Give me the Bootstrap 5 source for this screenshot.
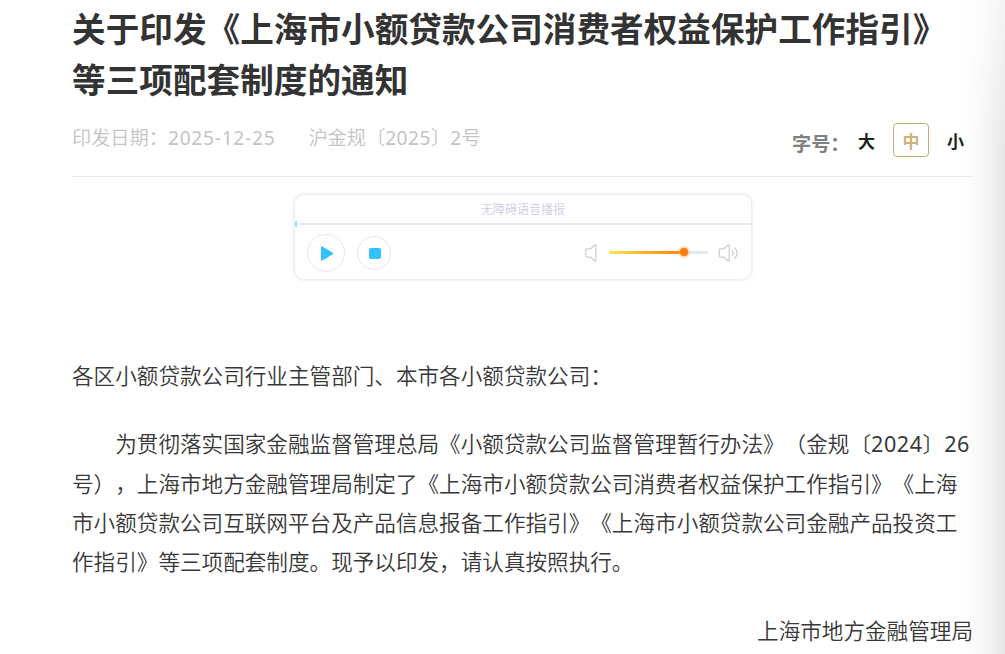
<!DOCTYPE html>
<html lang="zh-CN">
<head>
    <meta charset="UTF-8">
    <meta name="viewport" content="width=device-width, initial-scale=1">
    <title>关于印发《上海市小额贷款公司消费者权益保护工作指引》等三项配套制度的通知</title>
    <link rel="stylesheet" href="https://cdn.jsdelivr.net/npm/bootstrap@5.3.3/dist/css/bootstrap.min.css">
    <style>
        body {
            height: 100vh;
            font-family: "Noto Sans CJK SC", sans-serif;
            color: #383838;
            background:
                linear-gradient(to bottom, rgba(255, 255, 255, .6), rgba(255, 255, 255, 0) 150px),
                linear-gradient(to right, #fff 955px, #fdfdfd 968px, #f8f8f8 982px, #efefef 994px, #e6e6e6 1005px);
            text-spacing-trim: space-all;
        }
        .num {
            font-family: "Noto Sans", sans-serif;
            font-weight: 400;
            letter-spacing: .025em;
        }
        .articulo {
            width: 901px;
            margin-left: 72px;
            padding-top: 2px;
        }
        .doc-title {
            font-size: 33.6px;
            line-height: 51px;
            font-weight: 700;
            letter-spacing: .05px;
            color: #333;
            white-space: nowrap;
        }
        .doc-meta {
            height: 73px;
            border-bottom: 1px solid #ebebeb;
        }
        .doc-info {
            font-size: 19.2px;
            line-height: 30px;
            padding-top: 18px;
            color: #c4c4c4;
            gap: 33px;
            font-weight: 350;
        }
        .fecha {
            letter-spacing: .038em;
        }
        .size-bar {
            font-weight: 700;
            padding-top: 19px;
            padding-right: 9px;
        }
        .size-label {
            font-size: 19.2px;
            line-height: 40px;
            color: #808080;
            width: 66px;
            white-space: nowrap;
        }
        .size-opt {
            font-size: 17px;
            line-height: 35px;
            height: 34px;
            color: #222;
        }
        .size-opt.activo {
            width: 36px;
            line-height: 33px;
            margin: 0 18px;
            border: 1px solid #c9ac70;
            border-radius: 4px;
            color: #cdb27c;
            text-align: center;
        }
        .player {
            width: 456px;
            height: 84px;
            margin: 18px 0 0 223px;
            border-radius: 9px;
            background: #fff;
            box-shadow: 0 0 4px rgba(0, 0, 0, .17);
        }
        .player-title {
            height: 30px;
            font-size: 12px;
            line-height: 28px;
            color: #cfd0de;
            font-weight: 350;
            border-bottom: 2px solid #e9e9ef;
        }
        .player-mark {
            width: 2px;
            height: 6px;
            left: 0;
            top: 26px;
            background: #a5e0fa;
        }
        .player-body {
            height: 54px;
            padding: 2px 12px 0 12px;
        }
        .round-btn {
            border: 1px solid #e6e6ee;
            border-radius: 50%;
        }
        .round-play {
            width: 38px;
            height: 38px;
        }
        .round-stop {
            width: 34px;
            height: 34px;
            margin-left: 12px;
        }
        .vol-track {
            width: 99px;
            height: 3px;
            border-radius: 2px;
            margin: 0 10px 1px 11px;
            background: #e4e8ef;
        }
        .vol-fill {
            width: 76px;
            height: 3px;
            border-radius: 2px;
            background: linear-gradient(to right, #ffe452, #ff7e00);
        }
        .vol-knob {
            width: 8px;
            height: 8px;
            left: 71px;
            top: -3px;
            border-radius: 50%;
            background: #ff7b00;
            box-shadow: 0 0 3px 1px #ffb573;
        }
        .doc-body {
            margin-top: 77px;
            font-size: 21.6px;
            line-height: 38.88px;
            font-weight: 350;
            white-space: nowrap;
        }
        .doc-body p {
            margin-bottom: 30px;
        }
        .doc-body .sangria {
            margin: -.4px 0 30.4px;
            text-indent: 2em;
        }
    </style>
</head>
<body class="overflow-hidden">
    <main class="articulo">
        <h1 class="doc-title mb-0">关于印发《上海市小额贷款公司消费者权益保护工作指引》<br>等三项配套制度的通知</h1>

        <div class="doc-meta d-flex justify-content-between">
            <div class="doc-info d-flex">
                <span>印发日期：<span class="num fecha">2025-12-25</span></span>
                <span>沪金规〔<span class="num">2025</span>〕<span class="num">2</span>号</span>
            </div>
            <div class="size-bar d-flex">
                <span class="size-label">字号：</span>
                <span class="size-opt">大</span>
                <span class="size-opt activo">中</span>
                <span class="size-opt">小</span>
            </div>
        </div>

        <!-- reproductor de voz -->
        <div class="player">
            <div class="player-title position-relative text-center">无障碍语音播报<span class="player-mark position-absolute"></span></div>
            <div class="player-body d-flex align-items-center">
                <div class="round-btn round-play d-flex align-items-center justify-content-center">
                    <svg width="16" height="16" viewBox="0 0 16 16"><path d="M3.9 2.2 14.4 8.4 3.9 14.7Z" fill="#33c2ff" stroke="#33c2ff" stroke-width="1.8" stroke-linejoin="round"/></svg>
                </div>
                <div class="round-btn round-stop d-flex align-items-center justify-content-center">
                    <svg width="14" height="14" viewBox="0 0 14 14"><rect x="2" y="2" width="12" height="11" rx="2" fill="#33c2ff"/></svg>
                </div>
                <svg class="ms-auto" width="13" height="18" viewBox="0 0 13 18" fill="none" stroke="#cbcbd4" stroke-width="1.2" stroke-linejoin="round"><path d="M10.8 1.2v15.6q-.6.5-1.2 0L5.6 13.2H2.2Q.8 13.2.8 11.8V6.2Q.8 4.8 2.2 4.8H5.6L9.6 1.2q.6-.5 1.2 0Z"/></svg>
                <div class="vol-track position-relative">
                    <div class="vol-fill"></div>
                    <span class="vol-knob position-absolute"></span>
                </div>
                <svg width="21" height="18" viewBox="0 0 21 18" fill="none" stroke="#cbcbd4" stroke-width="1.2" stroke-linejoin="round" stroke-linecap="round"><path d="M11.2 1.2v15.6q-.6.5-1.2 0L6 13.2H2.6Q1.2 13.2 1.2 11.8V6.2Q1.2 4.8 2.6 4.8H6L10 1.2q.6-.5 1.2 0Z"/><path d="M14.3 6.3q2 2.7 0 5.4M17 4q4.2 5 0 10"/></svg>
            </div>
        </div>

        <div class="doc-body">
            <p>各区小额贷款公司行业主管部门、本市各小额贷款公司：</p>
            <p class="sangria">为贯彻落实国家金融监督管理总局《小额贷款公司监督管理暂行办法》（金规〔<span class="num">2024</span>〕<span class="num">26</span><br>号），上海市地方金融管理局制定了《上海市小额贷款公司消费者权益保护工作指引》《上海<br>市小额贷款公司互联网平台及产品信息报备工作指引》《上海市小额贷款公司金融产品投资工<br>作指引》等三项配套制度。现予以印发，请认真按照执行。</p>
            <p class="text-end">上海市地方金融管理局</p>
        </div>
    </main>
    <script src="https://cdn.jsdelivr.net/npm/bootstrap@5.3.3/dist/js/bootstrap.bundle.min.js"></script>
</body>
</html>
